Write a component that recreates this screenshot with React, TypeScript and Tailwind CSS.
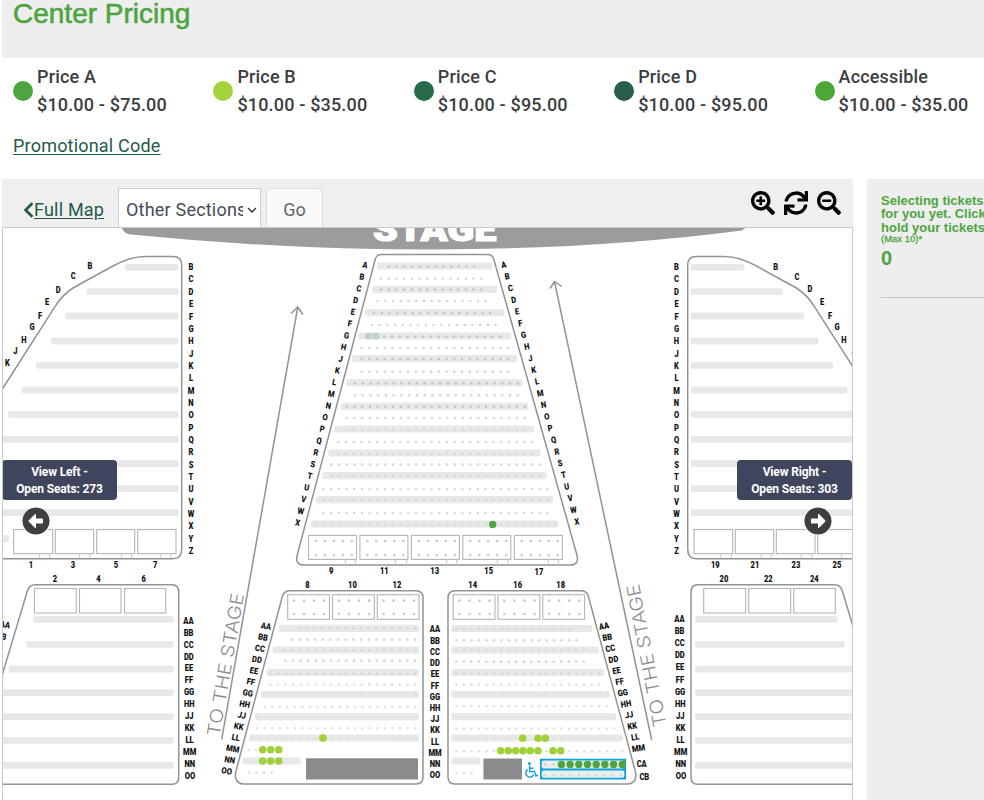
import { FaArrowAltCircleLeft, FaArrowAltCircleRight, FaChevronLeft, FaSearchMinus, FaSearchPlus, FaSync } from 'react-icons/fa';

const prices = [
  { name: 'Price A', range: '$10.00 - $75.00', dot: 'bg-[#4da53f]' },
  { name: 'Price B', range: '$10.00 - $35.00', dot: 'bg-[#a4d33e]' },
  { name: 'Price C', range: '$10.00 - $95.00', dot: 'bg-[#256b4a]' },
  { name: 'Price D', range: '$10.00 - $95.00', dot: 'bg-[#285c4b]' },
  { name: 'Accessible', range: '$10.00 - $35.00', dot: 'bg-[#4ca836]' },
];

const SIDE_ROWS = 'BCDEFGHJKLMNOPQRSTUVWXYZ'.split('');
const CENTER_ROWS = 'ABCDEFGHJKLMNOPQRSTUVWX'.split('');
const REAR_ROWS = 'ABCDEFGHJKLMNO'.split('').map(l => l + l);

// [x1, x2, y] of each shaded row
type Bar = [number, number, number];
// [first x, last x, y, seats]
type Seats = [number, number, number, number];
type Label = [string, number, number];

const bars: Bar[] = [
  [125, 178.7, 267.3], [86.7, 178.7, 291.7], [65.3, 178.7, 316], [51, 178.7, 341], [36, 178.7, 365.3], [21.7, 178.7, 390],
  [8, 178.7, 414.3], [-5, 178.7, 439.3], [-5, 178.7, 463.7], [-5, 178.7, 488.7], [-5, 178.7, 512.7], [-5, 9, 538.5],
  [690.7, 744.3, 267.3], [690.7, 782.7, 291.7], [690.7, 804, 316], [690.7, 818.3, 341], [690.7, 833, 365.3], [690.7, 847.3, 390],
  [690.7, 860, 414.3], [690.7, 860, 439.3], [690.7, 860, 463.7], [690.7, 860, 488.7], [690.7, 860, 512.7],
  [33, 174, 619.3], [26.3, 174, 644.3], [8.7, 174, 669], [-5, 174, 692.7], [-5, 174, 716.7], [-5, 174, 740.3], [-5, 174, 765.3],
  [695, 837.7, 619.3], [695, 844.7, 644.3], [695, 860, 669], [695, 860, 692.7], [695, 860, 716.7], [695, 860, 740.3], [695, 860, 765.3],
];

const seatBars: Bar[] = [
  [377, 492.3, 266], [372.3, 497, 289.3], [365, 504, 312.7], [358.3, 511, 336], [352, 517.3, 358.7], [346.3, 522.7, 382.7],
  [341, 528.3, 406.3], [334.7, 534.3, 429], [328.3, 540.7, 453], [322.3, 546.7, 475.7], [316, 553, 499.7], [310.7, 558.7, 524],
  [278.7, 419, 628.3], [272.7, 419, 650], [266.7, 419, 672.5], [261, 419, 694.5], [255, 419, 716.7], [249, 419, 738], [242.7, 300.7, 761],
  [451.3, 592.3, 628.5], [451.3, 599, 650], [451.3, 604.3, 672.5], [451.3, 610, 694.5], [451.3, 616.3, 716.7], [451.3, 622.3, 738], [451.3, 480.3, 761],
];

const centerSeats: Seats[] = [
  [389, 474.3, 266.5, 12], [381, 481.3, 278.5, 14], [381, 481.3, 289.7, 14], [377.7, 485.7, 301, 15], [374, 490.3, 313, 16],
  [371.7, 495.7, 325, 17], [384.3, 500.3, 336.7, 16], [361.7, 508.3, 348, 20], [361.7, 508.3, 359, 20], [361.7, 508.3, 371.7, 20],
  [355, 517.7, 383.3, 22], [355, 517.7, 395.3, 22], [346.7, 524.7, 406.7, 24], [346.7, 524.7, 418, 24], [346.7, 524.7, 429.3, 24],
  [338.3, 532.3, 442, 26], [338.3, 532.3, 453.7, 26], [331.3, 539.7, 464.7, 28], [331.3, 539.7, 476, 28], [323.3, 547.3, 489, 30],
  [323.3, 547.3, 500, 30], [323.3, 547.3, 513, 30], [315.7, 555.3, 525, 32],
  [299, 415, 628.7, 16], [292, 415, 639.7, 17], [285.3, 415, 650.3, 18], [285.3, 415, 660.7, 18], [270.3, 415, 673.7, 20],
  [456.3, 569.3, 629.3, 16], [456.3, 576.7, 640.3, 17], [456.3, 583.7, 650.7, 18], [456.3, 583.7, 661.7, 18], [456.3, 599, 673.3, 20],
];

const paleSeats: Seats[] = [
  [270.3, 415, 684.7, 20], [264.7, 415, 694.7, 21], [264.7, 415, 707, 21], [257.3, 415, 717, 22], [257.3, 415, 728.3, 22],
  [252, 363, 738.3, 15], [392, 415, 738.3, 4], [249, 256, 750, 2], [249, 256, 761, 2], [249, 271.7, 772.7, 4],
  [456.3, 599, 684.7, 20], [456.3, 606.7, 694.7, 21], [456.3, 606.7, 706.3, 21], [456.3, 614, 716.7, 22], [456.3, 614, 728.7, 22],
  [456.3, 622, 738.3, 23], [456.3, 622, 751.3, 23], [456.3, 471.3, 761.7, 3], [456.3, 471.3, 773.3, 3],
];

const limeSeats = [
  [323, 738], [262.7, 749.7], [270.7, 749.7], [278.7, 749.7], [262.7, 761], [270.7, 761], [278.7, 761],
  [522.7, 738.3], [538, 738.3], [545.3, 738.3],
  [500.7, 750.7], [508.3, 750.7], [515.7, 750.7], [523, 750.7], [530.3, 750.7], [538, 750.7], [553, 750.7], [560.7, 750.7],
];

// [x1, x2, y1, y2] of the boxes with no seats drawn
const emptyBoxes = [
  [13.7, 52.7, 529.5, 553.7], [55.3, 93.7, 529.5, 553.7], [96.7, 134.7, 529.5, 553.7], [137.7, 176, 529.5, 553.7],
  [694, 732.7, 529.5, 553.7], [735.3, 773.7, 529.5, 553.7], [776.3, 815, 529.5, 553.7], [817.7, 856, 529.5, 553.7],
  [34.5, 76.3, 588.5, 613], [79.5, 121, 588.5, 613], [124.5, 165.7, 588.5, 613],
  [703.7, 745.7, 588.5, 613], [748.7, 790.7, 588.5, 613], [793.7, 835.3, 588.5, 613],
];
const centerBoxes = [308.5, 359.9, 411.4, 462.8, 514.3];
const rearBoxes = [287.7, 332.6, 377.3, 453.2, 498, 542.8];

// [x1, x2, top, bottom] of the steps below the boxes
const steps = [
  [39.5, 49.5, 554, 558], [79.7, 89.7, 554, 558], [121.7, 131.7, 554, 558], [160.7, 170.7, 554, 558],
  [720.7, 731.3, 554, 558], [761.3, 771.3, 554, 558], [801.3, 811.7, 554, 558], [841.7, 856, 554, 558],
  [345.3, 355.3, 559.5, 565], [395.3, 406.7, 559.5, 565], [446.7, 456.7, 559.5, 565], [497.3, 508, 559.5, 565], [548.3, 558.3, 559.5, 565],
];

const labels: Label[] = [
  ['B', 90, 266.3], ['C', 73.3, 276], ['D', 58.3, 289.7], ['E', 47, 302], ['F', 40, 315.7], ['G', 32, 327], ['H', 24, 339.7], ['J', 15.3, 351], ['K', 7.3, 363.3],
  ['B', 775.7, 267], ['C', 797, 277.3], ['D', 810, 289], ['E', 822, 302], ['F', 830, 315.7], ['G', 837, 327], ['H', 844, 339.7], ['J', 853.5, 352],
  ['1', 31, 564.5], ['3', 73, 564.5], ['5', 116, 564.5], ['7', 155.3, 564.5], ['2', 55, 579], ['4', 98.5, 579], ['6', 143.7, 579],
  ['9', 331.3, 570.5], ['11', 384.3, 570.5], ['13', 434.7, 570.5], ['15', 488.7, 570.5], ['17', 539, 571.5],
  ['8', 307.5, 585], ['10', 352.5, 585], ['12', 397, 585], ['14', 472.7, 585], ['16', 517.7, 585], ['18', 560.7, 585],
  ['19', 715.3, 564.5], ['21', 755, 564.5], ['23', 796, 564.5], ['25', 837, 564.5], ['20', 724, 579], ['22', 768.3, 579], ['24', 814.3, 579],
  ...SIDE_ROWS.map((r, i): Label => [r, 191, 267 + i * 12.35]),
  ...SIDE_ROWS.map((r, i): Label => [r, 676.5, 267 + i * 12.35]),
  ...REAR_ROWS.map((r, i): Label => [r, 188.4 + i * 0.12, 620.5 + i * 11.97]),
  ...REAR_ROWS.map((r, i): Label => [r, 435, 629.3 + i * 11.23]),
  ...REAR_ROWS.map((r, i): Label => [r, 679.4 + i * 0.12, 619 + i * 12.08]),
];

const leftTilt: Label[] = [
  ...CENTER_ROWS.map((r, i): Label => [r, 365 - i * 3.06, 265 + i * 11.71]),
  ...REAR_ROWS.map((r, i): Label => [r, 266 - i * 3.02, 626 + i * 11.15]),
  ['AA', 5, 624.5], ['BB', 1.5, 636.3],
];
const rightTilt: Label[] = [
  ...CENTER_ROWS.map((r, i): Label => [r, 503.7 + i * 3.32, 264.7 + i * 11.67]),
  ...REAR_ROWS.slice(0, 12).map((r, i): Label => [r, 604 + i * 3.13, 626 + i * 11.1]),
];

function SeatRow({ seats, fill }: { seats: Seats; fill: string }) {
  const [x1, x2, y, n] = seats;
  return (
    <g fill={fill}>
      {Array.from({ length: n }, (_, i) => (
        <circle key={i} cx={x1 + ((x2 - x1) * i) / (n - 1)} cy={y} r={1.35} />
      ))}
    </g>
  );
}

function RowLabel({ label, tilt = 0 }: { label: Label; tilt?: number }) {
  const [text, x, y] = label;
  return (
    <text textAnchor="middle" transform={`translate(${x} ${y}) rotate(${tilt}) scale(0.86 1)`} y={3.1}>
      {text}
    </text>
  );
}

function SeatMap() {
  return (
    <svg viewBox="3 228 849 572" className="block h-[572px] w-[849px] font-['Roboto',sans-serif]">
      <path d="M121 226 Q123.5 234 131 234.5 Q280 249.5 434 249.5 Q600 249 742 230.5 L748 226Z" fill="#9b9c9e" />
      <text x={373} y={241} textLength={123.5} lengthAdjust="spacingAndGlyphs" fill="#fff" stroke="#fff" strokeWidth={1.2} fontSize={34} fontWeight={900}>STAGE</text>

      {bars.map(([x1, x2, y], i) => <rect key={i} x={x1} y={y - 3.4} width={x2 - x1} height={6.8} rx={2} fill="#e8e8e8" />)}
      {seatBars.map(([x1, x2, y], i) => <rect key={i} x={x1} y={y - 3.6} width={x2 - x1} height={7.2} rx={2} fill="#e7e8e7" />)}

      {/* section outlines */}
      <g fill="none" stroke="#939393" strokeWidth={1.5}>
        <path id="side" d="M-2 395.8 L55 306.7 Q62 295 73 288 L112 266.5 Q130 256.5 145 256.5 H173 Q181.7 256.5 181.7 265 V549 Q181.7 558.7 173 558.7 H-2" />
        <path id="rear" d="M-2 689 L27.5 590.5 Q29.5 584.7 35 584.7 H172 Q178.7 584.7 178.7 592 V777 Q178.7 784.3 172 784.3 H-2" />
        <use href="#side" transform="translate(869.4 0) scale(-1 1)" />
        <use href="#rear" transform="translate(869.7 0) scale(-1 1)" />
        <path d="M375.3 259 Q376.8 254.4 381 254.4 H488 Q492.3 254.4 493.7 259 L577.2 556 Q579 565 570 565 H304 Q295 565 297 556Z" />
        <path d="M282.5 596 Q284 590.7 290 590.7 H416 Q423 590.7 423 598 V777 Q423 784 416 784 H243 Q234 783 235.7 772Z" />
        <path d="M588.3 596 Q586.5 590.7 581 590.7 H455 Q448 590.7 448 598 V777 Q448 784 455 784 H628 Q637.5 783 635.5 772Z" />
        <path d="M221.7 739.3 L297.7 307.5 M291 313.5 L297.7 307 L302.9 314.5" />
        <path d="M651.7 740 L554.5 281.5 M550 288.5 L554.5 281.5 L561.7 286.5" />
      </g>

      <g fill="#fff" stroke="#b3b4b5" strokeWidth={1.1}>
        {emptyBoxes.map(([x1, x2, y1, y2], i) => <rect key={i} x={x1} y={y1} width={x2 - x1} height={y2 - y1} />)}
        {centerBoxes.map(x => <rect key={x} x={x} y={535.4} width={48} height={24} />)}
        {rearBoxes.map(x => <rect key={x} x={x} y={594.7} width={41.8} height={24.6} />)}
      </g>
      <g stroke="#cbcbcb" strokeWidth={1}>
        {steps.map(([x1, x2, y1, y2]) => <path key={x1 + y1} d={`M${x1} ${y1} V${y2} M${x2} ${y1} V${y2}`} />)}
      </g>

      {centerSeats.map((s, i) => <SeatRow key={i} seats={s} fill={i % 2 || i > 12 ? '#d5d9d7' : '#c4c7c6'} />)}
      {paleSeats.map((s, i) => <SeatRow key={i} seats={s} fill="#e1e4d6" />)}
      {centerBoxes.map(x => [541, 555].map(y => <SeatRow key={`${x}-${y}`} seats={[x + 7.4, x + 43.4, y, 5]} fill="#c9cccb" />))}
      {rearBoxes.map(x => [600.7, 614].map(y => <SeatRow key={`${x}-${y}`} seats={[x + 6.3, x + 36.5, y, 4]} fill="#c9cccb" />))}

      <g fill="#c3d1cb">
        <circle cx={368.7} cy={336} r={3.6} />
        <circle cx={376} cy={336} r={3.6} />
      </g>
      <circle cx={492.7} cy={524.5} r={3.7} fill="#4da53f" />
      {limeSeats.map(([x, y]) => <circle key={`${x}-${y}`} cx={x} cy={y} r={3.8} fill="#a0d03a" />)}

      <rect x={306} y={758.3} width={112} height={21.2} fill="#8a8b8c" />
      <rect x={483.4} y={758.5} width={38.6} height={21} fill="#8a8b8c" />

      {/* accessible seating */}
      <circle cx={529.4} cy={763.6} r={1.5} fill="#1a9cd8" />
      <path d="M529.6 765.5 V771.5 H534.5 L536 776 L538 775.2 M529.8 768.2 H533.5 M527.8 769.3 A4.2 4.2 0 1 0 533.8 774.6" fill="none" stroke="#1a9cd8" strokeWidth={1.4} />
      <rect x={540} y={758.7} width={86} height={20.8} fill="#12a3dc" />
      <rect x={541.7} y={760.4} width={82.6} height={8.2} rx={2} fill="#e9eeee" />
      <rect x={541.7} y={770.6} width={82.6} height={7.2} rx={2} fill="#e9eeee" />
      <SeatRow seats={[545, 553.5, 764.5, 2]} fill="#ccd2d0" />
      <SeatRow seats={[545, 621, 775, 10]} fill="#d3dad7" />
      {[0, 1, 2, 3, 4, 5, 6, 7].map(i => <circle key={i} cx={561.4 + i * 8.7} cy={764.4} r={3.7} fill="#4da53f" />)}

      <g fill="#111" fontSize={8.8} fontWeight={900}>
        {labels.map((l, i) => <RowLabel key={i} label={l} />)}
        {leftTilt.map((l, i) => <RowLabel key={i} label={l} tilt={10} />)}
        {rightTilt.map((l, i) => <RowLabel key={i} label={l} tilt={-10} />)}
        <RowLabel label={['CA', 641.7, 764.2]} />
        <RowLabel label={['CB', 644.3, 776.7]} />
      </g>

      <g fill="#8b8c8d" fontSize={18} fontWeight={300} className="font-['Inter',sans-serif]">
        <text textLength={145} lengthAdjust="spacingAndGlyphs" transform="translate(219.5 737) rotate(-80.2)">TO THE STAGE</text>
        <text textLength={145} lengthAdjust="spacingAndGlyphs" transform="translate(666.5 725.5) rotate(-101)">TO THE STAGE</text>
      </g>
    </svg>
  );
}

function ViewTag({ title, seats }: { title: string; seats: number }) {
  return (
    <div className="flex h-10 w-[115px] flex-col items-center justify-center rounded bg-[#40455e] pt-0.5 text-xs leading-[17.5px] font-bold tracking-[-0.15px] text-white">
      <span>{title}</span>
      <span>Open Seats: {seats}</span>
    </div>
  );
}

export default function App() {
  return (
    <div className="h-[800px] w-[984px] overflow-hidden bg-white pl-0.5 font-['Roboto',sans-serif] text-lg text-[#3c3d3f]">
      <header className="flow-root h-[58px] bg-[#eeeeee] pl-[11px]">
        <h1 className="-mt-1 font-['Liberation_Sans',sans-serif] text-[28px] leading-9 font-normal text-[#4da53f] [-webkit-text-stroke:0.6px_#4da53f]">Center Pricing</h1>
      </header>

      <section className="h-[121px] pl-[11px]">
        <ul className="flex pt-[5px]">
          {prices.map(p => (
            <li key={p.name} className="flex w-[200.4px] shrink-0 items-center gap-1">
              <span className={`size-5 shrink-0 rounded-full ${p.dot}`} />
              <span className="leading-[27.5px] font-medium tracking-[0.17px] whitespace-nowrap">
                {p.name}
                <br />
                {p.range}
              </span>
            </li>
          ))}
        </ul>
        <a href="#" className="mt-[14px] inline-block leading-7 tracking-[0.2px] text-[#24594a] underline underline-offset-2">Promotional Code</a>
      </section>

      <main className="flex gap-3.5">
        <div className="w-[851px] shrink-0">
          <div className="flex h-12 items-start bg-[#efefef] pl-[21px]">
            <a href="#" className="mt-[17px] flex h-7 w-[95px] items-center text-[#24594a]">
              <FaChevronLeft className="w-[11px] text-lg" />
              <span className="tracking-[0.2px] underline underline-offset-2">Full Map</span>
            </a>
            <button className="mt-[9px] flex h-[39px] w-[143px] items-center border border-b-0 border-[#cfcfcf] bg-white pl-[7px] text-left">
              <span className="mt-1 w-[117px] overflow-hidden tracking-[0.2px] whitespace-nowrap text-[#474b55]">Other Sections</span>
              <svg viewBox="0 0 10 6" className="mt-1 ml-1 h-1.5 w-2.5" fill="none" stroke="#333" strokeWidth={1.4}>
                <path d="M1 1 L5 5 L9 1" />
              </svg>
            </button>
            <button className="mt-[9px] ml-[5px] h-[39px] w-[57px] rounded-t border border-b-0 border-[#dddddd] bg-[#f9f9f9] pt-1 text-[#66676a]">Go</button>
            <div className="mt-3 mr-3 ml-auto flex gap-[9px] text-2xl text-black">
              <FaSearchPlus />
              <FaSync />
              <FaSearchMinus />
            </div>
          </div>

          <div className="relative h-[573px] overflow-hidden border border-b-0 border-[#c9c9c9]">
            <SeatMap />
            <div className="absolute top-[232px] -left-px">
              <ViewTag title="View Left -" seats={273} />
              <FaArrowAltCircleLeft className="mt-[7px] ml-5 rounded-full bg-white text-[28px] text-[#3d3f42]" />
            </div>
            <div className="absolute top-[232px] right-0">
              <ViewTag title="View Right -" seats={303} />
              <FaArrowAltCircleRight className="mt-[7px] ml-[67px] rounded-full bg-white text-[28px] text-[#3d3f42]" />
            </div>
          </div>
        </div>

        <aside className="h-[621px] w-[117px] shrink-0 overflow-hidden bg-[#eeeeee] pt-[15px] pl-3.5 font-['Liberation_Sans',sans-serif] font-bold text-[#4da53f]">
          <p className="w-[300px] text-[13px] leading-[13.3px]">
            Selecting tickets
            <br />
            for you yet. Click
            <br />
            hold your tickets
          </p>
          <p className="text-[9.5px] leading-[9px] font-normal [-webkit-text-stroke:0.3px_#4da53f]">(Max 10)*</p>
          <p className="mt-[3px] text-[20px] leading-6">0</p>
          <hr className="mt-[27px] w-[120px] border-[#c6c6c6]" />
        </aside>
      </main>
    </div>
  );
}
